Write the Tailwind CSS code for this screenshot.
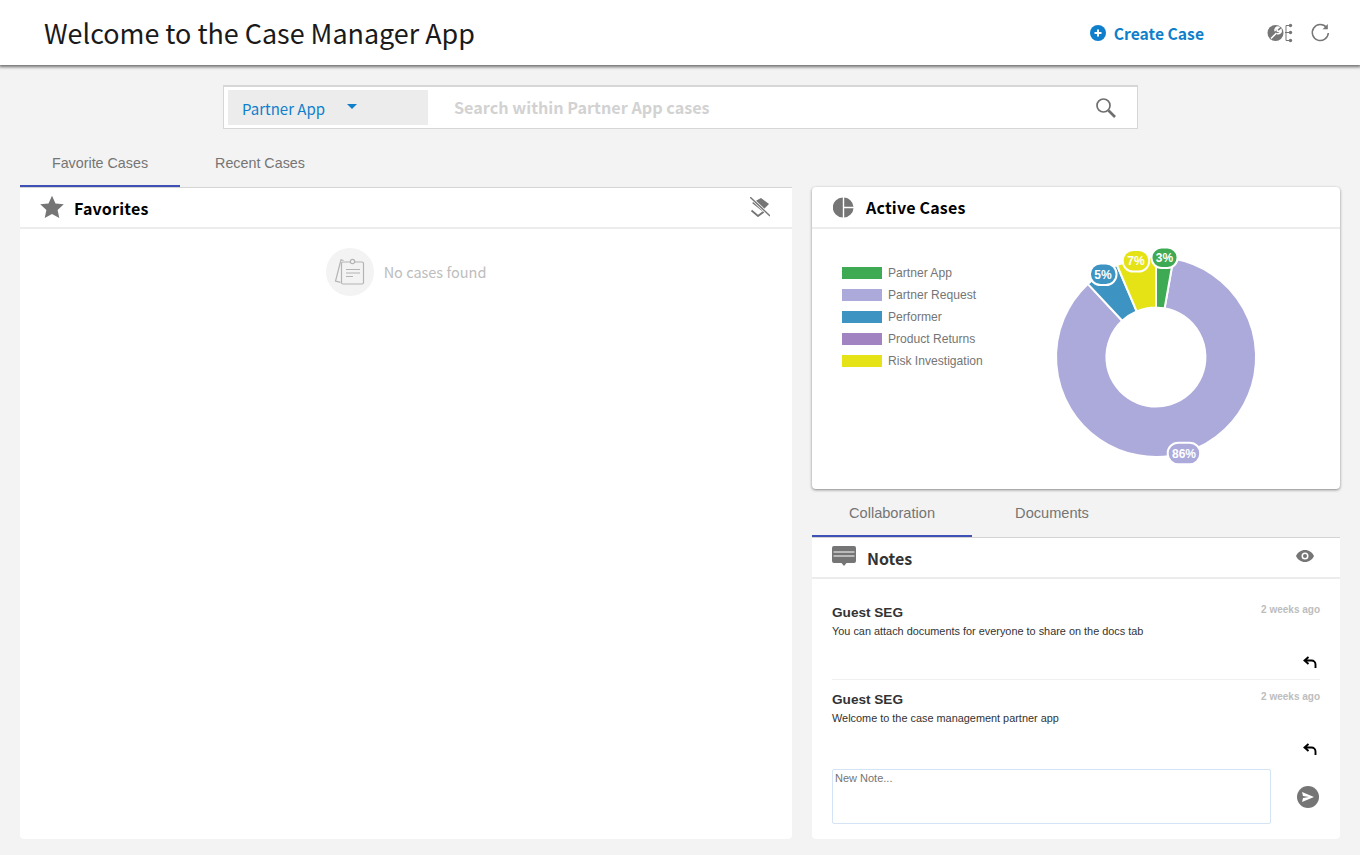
<!DOCTYPE html>
<html lang="en">
<head>
  <meta charset="UTF-8" />
  <meta name="viewport" content="width=device-width, initial-scale=1.0" />
  <title>Case Manager</title>
  <script src="https://cdn.jsdelivr.net/npm/@tailwindcss/browser@4"></script>
</head>
<body class="bg-[#f3f3f3] h-[855px] overflow-hidden font-['Liberation_Sans',sans-serif] text-[#333]">

  <!-- Header -->
  <header class="h-[65px] bg-white shadow-[0_1px_3px_1px_rgba(0,0,0,0.55)] flex items-center pl-[44px] pr-[30px] relative z-10 font-['Noto_Sans_CJK_JP',sans-serif]">
    <h1 class="text-[26.900px] leading-[38px] text-[#1a1a1a] flex-1 mt-[1px]">Welcome to the Case Manager App</h1>
    <button class="flex items-center text-[#0f7fcb] text-[15.700px] font-bold mt-[2px]">
      <svg class="w-[16px] h-[16px] mr-[8px]" viewBox="0 0 16 16"><circle cx="8" cy="8" r="8" fill="#0f7fcb"/><path d="M4.5 8h7M8 4.5v7" stroke="#fff" stroke-width="2"/></svg>
      Create Case
    </button>
    <svg class="w-[26px] h-[22px] ml-[63px]" viewBox="0 0 26 22" fill="none">
      <circle cx="8.500" cy="11" r="8" fill="#767676"/>
      <path d="M4 16.500l5.500-5.500M10 11.500a3 3 0 0 0 4-3.800l-2 1.800-1.700-.6-.4-1.700 2-1.900a3 3 0 0 0-3.700 4" stroke="#fff" stroke-width="1.600"/>
      <path d="M18 10.500h5M19 3.500v15h4M19 3.500h4" stroke="#767676" stroke-width="1"/>
      <circle cx="23.500" cy="3.500" r="1.700" fill="#767676"/><circle cx="23.500" cy="10.500" r="1.700" fill="#767676"/><circle cx="23.500" cy="18.500" r="1.700" fill="#767676"/>
    </svg>
    <svg class="w-[20px] h-[20px] ml-[17px]" viewBox="0 0 20 20" fill="none">
      <path d="M16.500 4.500A8 8 0 1 0 18.300 10" stroke="#767676" stroke-width="1.500"/>
      <path d="M17.800 1v5.200h-5.200z" fill="#767676"/>
    </svg>
  </header>

  <!-- Search -->
  <div class="w-[915px] h-[44px] ml-[223px] mt-[20px] bg-white border border-t-2 border-[#d6d6d6] flex items-center pl-[4px] pr-[20px] font-['Noto_Sans_CJK_JP',sans-serif]">
    <div class="w-[200px] h-[35px] bg-[#ececec] flex items-center pl-[14px] text-[#0f7fcb] text-[15px]">
      <span class="mt-[3px]">Partner App</span>
      <span class="ml-[22px] mb-[2px] w-0 h-0 border-l-[5.500px] border-r-[5.500px] border-t-[5.500px] border-l-transparent border-r-transparent border-t-[#0f7fcb]"></span>
    </div>
    <span class="ml-[26px] text-[16.200px] font-bold text-[#d2d2d2] flex-1 mb-[1px]">Search within Partner App cases</span>
    <svg class="w-[22px] h-[22px]" viewBox="0 0 22 22" fill="none">
      <circle cx="8.500" cy="8.500" r="6.500" stroke="#6f6f6f" stroke-width="1.700"/>
      <path d="M13.500 13.500l6.500 6.500" stroke="#6f6f6f" stroke-width="2.600"/>
    </svg>
  </div>

  <main class="flex px-[20px] gap-[20px]">

    <!-- Left column -->
    <section class="w-[772px] mt-[17px]">
      <div class="flex h-[42px] text-[14.300px] text-[#757575] text-center leading-[34px] border-b border-[#d4d4d4]">
        <div class="w-[160px] h-[41px] border-b-[2px] border-[#3f51b5]">Favorite Cases</div>
        <div class="w-[160px]">Recent Cases</div>
      </div>
      <div class="bg-white h-[651px] rounded-b-[4px]">
        <div class="h-[41px] border-b-2 border-[#ececec] flex items-center pl-[20px] pr-[22px] font-['Noto_Sans_CJK_JP',sans-serif]">
          <svg class="w-[24px] h-[24px] mr-[10px] mb-[1px]" viewBox="0 0 24 24"><path fill="#757575" d="M12 .8l3.500 7.600 8.300.9-6.200 5.600 1.700 8.200L12 19l-7.300 4.100 1.700-8.200L.2 9.300l8.300-.9z"/></svg>
          <span class="flex-1 text-[16px] font-bold text-black tracking-[0.2px]">Favorites</span>
          <svg class="w-[20px] h-[20px] mb-[2px]" viewBox="0 0 20 20" fill="none">
            <path d="M2 6l9-5 8 6-7 7z" fill="#757575"/>
            <path d="M1.500 13.500l6.500 5.500 6-4.500" stroke="#757575" stroke-width="1.800"/>
            <path d="M0 0l20 19" stroke="#fff" stroke-width="2.800"/>
            <path d="M0 0l20 19" stroke="#757575" stroke-width="1.400"/>
          </svg>
        </div>
        <div class="flex items-center justify-center pt-[19px]">
          <div class="w-[48px] h-[48px] rounded-full bg-[#f3f3f3] flex items-center justify-center">
            <svg class="w-[32px] h-[30px]" viewBox="0 0 32 30" fill="none" stroke="#b4b4b4" stroke-width="1.200">
              <path d="M9.500 3.500l-2.500-.7L1.500 24l5 1.400"/>
              <rect x="7.500" y="5" width="22" height="22" rx="1.500" fill="#f3f3f3"/>
              <circle cx="18.500" cy="4.500" r="2.200" fill="#f3f3f3"/>
              <path d="M12 12.500h14M12 16h14M12 19.500h7"/>
            </svg>
          </div>
          <span class="ml-[10px] text-[14.500px] text-[#bdbdbd] font-['Noto_Sans_CJK_JP',sans-serif]">No cases found</span>
        </div>
      </div>
    </section>

    <!-- Right column -->
    <section class="w-[528px] mt-[58px]">
      <div class="bg-white h-[302px] rounded-[4px] shadow-[0_1px_3px_rgba(0,0,0,0.45)]">
        <div class="h-[42px] border-b-2 border-[#ececec] flex items-center pl-[21px] font-['Noto_Sans_CJK_JP',sans-serif]">
          <svg class="w-[21px] h-[21px] mr-[12px]" viewBox="0 0 21 21">
            <path fill="#757575" d="M9.800.5v20A10 10 0 0 1 9.800.5zM11.200.5a10 10 0 0 1 9.300 9.300h-9.300zM11.200 11.200h9.300a10 10 0 0 1-9.300 9.300z"/>
          </svg>
          <span class="text-[16px] font-bold text-black tracking-[0.2px]">Active Cases</span>
        </div>
        <div class="flex relative">
          <ul class="pl-[30px] pt-[33px] text-[12.100px] text-[#757575] leading-[22px]">
            <li class="flex items-center"><span class="w-[40px] h-[12px] bg-[#3eaa54] mr-[6px]"></span>Partner App</li>
            <li class="flex items-center"><span class="w-[40px] h-[12px] bg-[#aca9db] mr-[6px]"></span>Partner Request</li>
            <li class="flex items-center"><span class="w-[40px] h-[12px] bg-[#3d94c2] mr-[6px]"></span>Performer</li>
            <li class="flex items-center"><span class="w-[40px] h-[12px] bg-[#a183c2] mr-[6px]"></span>Product Returns</li>
            <li class="flex items-center"><span class="w-[40px] h-[12px] bg-[#e5e216] mr-[6px]"></span>Risk Investigation</li>
          </ul>
          <!-- donut, 1156,357 centre in page coords -->
          <svg class="absolute left-[234px] top-[1px] w-[220px] h-[240px] font-['Liberation_Sans',sans-serif]" viewBox="0 0 220 240">
            <g transform="translate(110 127)" stroke="#fff" stroke-width="2">
              <path fill="#aca9db" d="M17.400 -98.500A100 100 0 1 1 -68.200 -73.100L-33.800 -36.200A49.500 49.500 0 1 0 8.600 -48.700Z"/>
              <path fill="#3d94c2" d="M-68.200 -73.100A100 100 0 0 1 -39.100 -92L-19.300 -45.600A49.500 49.500 0 0 0 -33.800 -36.200Z"/>
              <path fill="#e5e216" d="M-39.100 -92A100 100 0 0 1 0 -100L0 -49.500A49.500 49.500 0 0 0 -19.300 -45.600Z"/>
              <path fill="#3eaa54" d="M0 -100A100 100 0 0 1 17.400 -98.500L8.600 -48.700A49.500 49.500 0 0 1 0 -49.500Z"/>
            </g>
            <g stroke="#fff" stroke-width="2">
              <rect x="44" y="33.500" width="26.500" height="21.500" rx="10.500" fill="#3d94c2"/>
              <rect x="76.700" y="20" width="26.500" height="21.500" rx="10.500" fill="#e5e216"/>
              <rect x="105.500" y="17.500" width="26" height="20.500" rx="10" fill="#3eaa54"/>
              <rect x="121.700" y="212.700" width="32.500" height="21.500" rx="10.500" fill="#aca9db"/>
            </g>
            <g fill="#fff" font-size="12" font-weight="700" text-anchor="middle">
              <text x="57" y="48.500">5%</text>
              <text x="90" y="35">7%</text>
              <text x="118.500" y="32">3%</text>
              <text x="138" y="228">86%</text>
            </g>
          </svg>
        </div>
      </div>

      <div class="flex h-[49px] text-[14.600px] text-[#757575] text-center leading-[48px] border-b border-[#d4d4d4]">
        <div class="w-[160px] h-[48px] border-b-[2px] border-[#3f51b5]">Collaboration</div>
        <div class="w-[160px]">Documents</div>
      </div>
      <div class="bg-white h-[301px] rounded-b-[4px]">
        <div class="h-[41px] border-b-2 border-[#ececec] flex items-center pl-[20px] pr-[26px] font-['Noto_Sans_CJK_JP',sans-serif]">
          <svg class="w-[24px] h-[21px] mr-[11px] mb-[2px]" viewBox="0 0 24 21">
            <path fill="#757575" d="M2 0h20a2 2 0 0 1 2 2v13a2 2 0 0 1-2 2h-7.500L12 20l-2.500-3H2a2 2 0 0 1-2-2V2a2 2 0 0 1 2-2z"/>
            <path stroke="#fff" stroke-width="1" d="M1.500 6h21M1.500 10h21"/>
          </svg>
          <span class="flex-1 text-[16px] font-bold text-[#333]">Notes</span>
          <svg class="w-[18px] h-[12px] mb-[3px]" viewBox="0 0 18 12">
            <path fill="#757575" fill-rule="evenodd" d="M9 0c4 0 7.400 2.500 9 6-1.600 3.500-5 6-9 6S1.600 9.500 0 6c1.600-3.500 5-6 9-6zm0 2.500a3.500 3.500 0 1 0 0 7 3.500 3.500 0 0 0 0-7zM9 4a2 2 0 1 1 0 4 2 2 0 0 1 0-4z"/>
          </svg>
        </div>
        <div class="px-[20px]">
          <article class="h-[101px] border-b border-[#efefef] pt-[26px]">
            <div class="flex justify-between">
              <span class="text-[13.600px] leading-[16px] font-bold">Guest SEG</span>
              <span class="text-[10px] leading-[12px] font-bold text-[#bdbdbd] mt-[-1px]">2 weeks ago</span>
            </div>
            <p class="text-[10.900px] leading-[14px] mt-[3px] text-[#333]">You can attach documents for everyone to share on the docs tab</p>
            <div class="flex justify-end mt-[18px] mr-[3px]">
              <svg class="w-[14px] h-[12px]" viewBox="0 0 14 12" fill="none" stroke="#000" stroke-width="1.900"><path d="M5.500 1L1.500 4.500l4 3.500M1.500 4.500h7a4 4 0 0 1 4 4V12"/></svg>
            </div>
          </article>
          <article class="h-[89px] pt-[12px]">
            <div class="flex justify-between">
              <span class="text-[13.600px] leading-[16px] font-bold">Guest SEG</span>
              <span class="text-[10px] leading-[12px] font-bold text-[#bdbdbd] mt-[-1px]">2 weeks ago</span>
            </div>
            <p class="text-[10.900px] leading-[14px] mt-[3px] text-[#333]">Welcome to the case management partner app</p>
            <div class="flex justify-end mt-[18px] mr-[3px]">
              <svg class="w-[14px] h-[12px]" viewBox="0 0 14 12" fill="none" stroke="#000" stroke-width="1.900"><path d="M5.500 1L1.500 4.500l4 3.500M1.500 4.500h7a4 4 0 0 1 4 4V12"/></svg>
            </div>
          </article>
          <div class="flex items-center">
            <textarea placeholder="New Note..." class="w-[439px] h-[55px] border border-[#d3e4f5] rounded-[2px] px-[2px] py-[2px] text-[11px] leading-[13px] placeholder:text-[#757575] resize-none outline-none"></textarea>
            <span class="ml-[26px] w-[22px] h-[22px] rounded-full bg-[#757575] flex items-center justify-center">
              <svg class="w-[12px] h-[10px]" viewBox="0 0 12 10"><path fill="#fff" d="M0 0l12 5-12 5 1-4 6-1-6-1z"/></svg>
            </span>
          </div>
        </div>
      </div>
    </section>
  </main>
</body>
</html>
